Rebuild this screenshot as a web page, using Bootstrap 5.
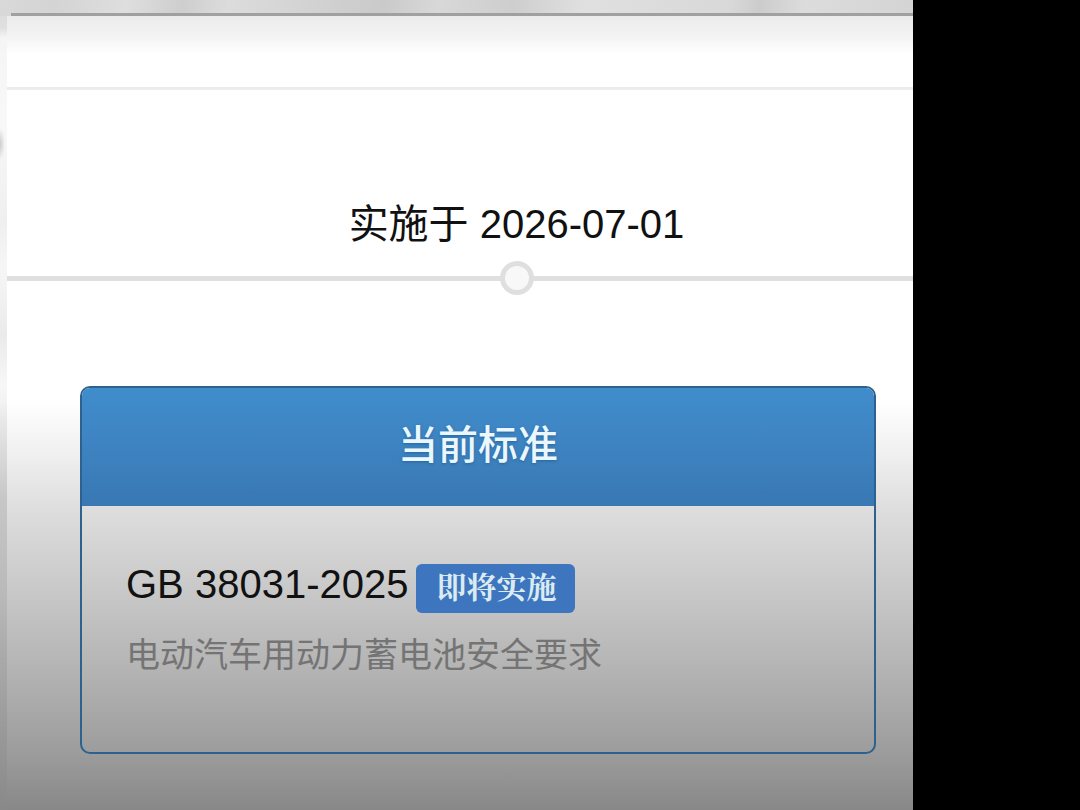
<!DOCTYPE html>
<html lang="zh-CN">
<head>
<meta charset="utf-8">
<meta name="viewport" content="width=device-width, initial-scale=1">
<title>GB 38031-2025</title>
<link href="https://cdn.jsdelivr.net/npm/bootstrap@5.3.0/dist/css/bootstrap.min.css" rel="stylesheet">
<style>
body { background: #000; color: #111; font-family: "Liberation Sans", "Noto Sans CJK SC", sans-serif; font-size: 40px; line-height: 48px; }
.screen { padding-right: 167px; }
/* marbled backdrop behind the sheet */
.backdrop {
  padding-left: 7px;
  background:
    linear-gradient(rgba(0,0,0,0) 400px, rgba(0,0,0,.13) 506px, rgba(0,0,0,.28) 650px, rgba(0,0,0,.42) 100%),
    radial-gradient(ellipse 5px 16px at 0 144px, #ccc, transparent),
    linear-gradient(100deg, #d9d9d9, #d4d4d4 6%, #dedede 14%, #cecece 20%, #dcdcdc 25%, #cacaca 42%, #d8d8d8 48%, #cecece 56%, #e0e0e0 64%, #d8d8d8 80%, #ccc 83%, #dcdcdc 88%, #d4d4d4) 0 0 / 100% 16px no-repeat,
    linear-gradient(#d8d8d8, #e0e0e0 28px, #f5f5f5 38px, #f8f8f8 120px, #efefef 220px, #f6f6f6 270px, #eaeaea 335px, #f7f7f7 385px, #eee 420px, #e2e2e2 500px, #eee 600px, #ebebeb);
}
.top-edge { height: 16px; border-bottom: 3px solid #a0a0a0; margin-left: 4px; }
.sheet { background: linear-gradient(#fff 384px, #f1f1f1 434px, #dedede 492px, #b2b2b2 660px, #9d9d9d 734px, #888 100%); }
.toolbar-shade { height: 74px; border-bottom: 3px solid #ececec; background: linear-gradient(#ebebeb, #f3f3f3 20px, #fff 38px); }
.timeline { padding-top: 110px; padding-left: 113px; }
.rail { height: 34px; margin-top: 13px; padding-left: 114px; background: linear-gradient(#dfdfdf, #dfdfdf) center / 100% 5px no-repeat; }
.node { width: 34px; height: 34px; border: 5px solid #dfdfdf; background: #f8f8f8; }
.standard { --bs-card-border-color: #2d618f; --bs-card-border-width: 2px; --bs-card-border-radius: 10px; --bs-card-inner-border-radius: 8px; --bs-card-bg: transparent; --bs-card-color: #111; margin: 91px 37px 56px 73px; }
.standard .card-header { padding: 33px 0 37px; border: 0; background: linear-gradient(#408dcc, #3e84c2 45%, #3878b3); color: #eaf7ff; font-size: 40px; line-height: 48px; font-weight: 500; text-shadow: 0 1px 3px #29659b; }
.standard .card-body { padding: 54px 45px 75px 44px; }
.status { padding: 6px 19px 13px 20px; border-radius: 6px; background: #3d75bf; color: #dcebf0; font: 700 30px/30px "Noto Serif CJK SC", "Noto Sans CJK SC", serif; margin-top: 4px; }
.summary { font-size: 34px; line-height: 44px; color: #747474; margin-top: 20px; }
</style>
</head>
<body>
<div class="screen min-vh-100 d-flex">
  <div class="backdrop flex-grow-1 d-flex flex-column">
    <div class="top-edge"></div>
    <main class="sheet flex-grow-1">
      <div class="toolbar-shade"></div>
      <section class="text-center">
        <div class="timeline">实施于 <time datetime="2026-07-01">2026-07-01</time></div>
        <div class="rail d-flex justify-content-center"><span class="node rounded-circle"></span></div>
      </section>
      <article class="card standard">
        <h1 class="card-header text-center">当前标准</h1>
        <div class="card-body">
          <div class="d-flex align-items-start">
            <span class="me-2">GB 38031-2025</span>
            <span class="status">即将实施</span>
          </div>
          <p class="summary mb-0">电动汽车用动力蓄电池安全要求</p>
        </div>
      </article>
    </main>
  </div>
</div>
<script src="https://cdn.jsdelivr.net/npm/bootstrap@5.3.0/dist/js/bootstrap.bundle.min.js"></script>
</body>
</html>
